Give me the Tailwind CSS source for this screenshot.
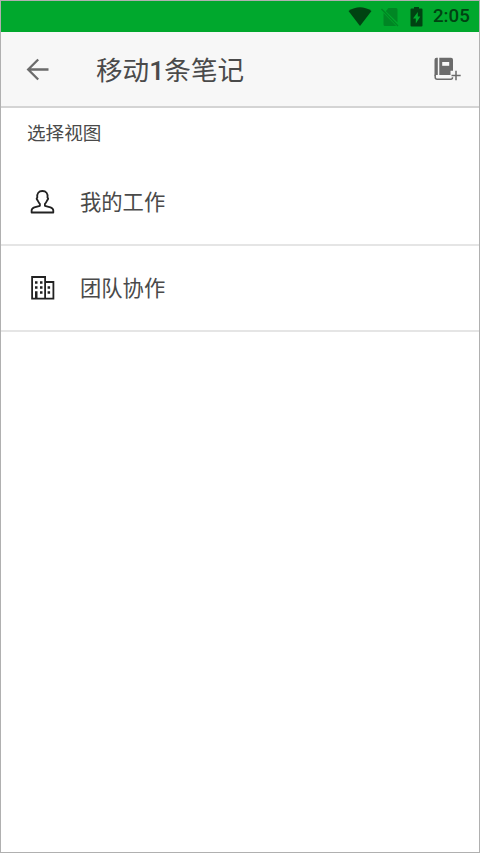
<!DOCTYPE html>
<html lang="zh-CN">
<head>
<meta charset="utf-8">
<title>移动1条笔记</title>
<script src="https://cdn.jsdelivr.net/npm/@tailwindcss/browser@4"></script>
</head>
<body class="bg-white">
<div class="flex h-[853px] w-[480px] flex-col overflow-hidden border border-[#b0b0b0] bg-white font-['Roboto','Noto_Sans_CJK_SC',sans-serif] text-[#4a4a4a]">
  <div class="flex h-[31px] shrink-0 items-center justify-end bg-[#00a82d] pr-[10px] text-[#004312]">
    <svg class="mr-[9px] h-[20px] w-[24px]" viewBox="0 0 24 20" fill="currentColor"><path d="M.5 4Q12-3.500 23.500 4L12 19Z"/></svg>
    <svg class="mr-[11px] h-[20px] w-[18px]" viewBox="0 0 18 20" fill="#008624"><path d="M4.800 4.300 7.500 1H15q1.500 0 1.500 1.500V15.500ZM2.500 6 15.200 19H4Q2.500 19 2.500 17.500Z"/><path d="M.5 2 17 19" stroke="#008624" stroke-width="1.300"/></svg>
    <svg class="mr-[10px] h-[20px] w-[13px]" viewBox="0 0 13 20" fill="currentColor"><path fill-rule="evenodd" d="M4 0h5v1.500h2.500Q12.500 1.500 12.500 2.500v16Q12.500 19.500 11.500 19.500h-10Q.5 19.500 .5 18.500v-16Q.5 1.500 1.500 1.500H4ZM7.800 5 3 11.500H5.800v5L10.300 9.500H7.800Z"/></svg>
    <span class="w-[36px] text-[18.7px] leading-[31px] font-medium whitespace-nowrap">2:05</span>
  </div>
  <header class="flex h-[76px] shrink-0 items-center border-b-2 border-[#d4d4d4] bg-[#f7f7f7] pr-[18px] pl-[25px]">
    <svg class="h-[24px] w-[24px]" viewBox="0 0 24 24" fill="none" stroke="#6b6b6b" stroke-width="2.300"><path d="M22.500 12.500H2.500M12.200 2.500 2.200 12.500l10 10"/></svg>
    <h1 class="ml-[46px] grow pt-[3px] text-[26.600px] leading-[40px] whitespace-nowrap">移动<span class="font-medium">1</span>条笔记</h1>
    <svg class="h-[24px] w-[27px]" viewBox="0 0 27 24"><g transform="translate(.5 .8)"><path fill="#6b6b6b" d="M2 0H3.300V17.300H2Q.9 17.300 0 18.500V2Q0 0 2 0ZM4.800 0H16.500Q18.500 0 18.500 2V13H16V17.300H4.800Z"/><path fill="#f7f7f7" d="M7.700 4.200h7v3.800h-7z"/><path fill="none" stroke="#6b6b6b" stroke-width="1.500" d="M.7 17V19.500Q.7 21.500 2.700 21.500H16.500Q18 21.500 18 19.500M21.500 13v9.500M17 17.700H26.200"/></g></svg>
  </header>
  <main>
    <h2 class="h-[51px] pt-px pl-[26px] text-[18.6px] leading-[51px]">选择视图</h2>
    <ul>
      <li class="flex h-[87px] items-center border-b-2 border-[#e5e5e5] pl-[29px]">
        <svg class="h-[26px] w-[26px]" viewBox="0 0 26 26" fill="none" stroke="#222" stroke-width="1.800" stroke-linejoin="round"><path transform="translate(-.3 0)" d="M10.200 16.800V15C8.500 13.500 8.300 11.500 7.300 10.500c-.6-.6-.4-1.500.3-1.900C7 4.500 9 2 12.700 2s5.700 2.500 5.100 6.600c.7.400.9 1.300.3 1.900-1 1-1.200 3-2.900 4.500v1.800L20.800 18.300Q23.600 19.400 23.600 21.500V23.500H1.900V21.500Q1.900 19.400 4.600 18.300Z"/></svg>
        <span class="ml-[24px] pt-[2px] text-[21.3px] leading-[32px]">我的工作</span>
      </li>
      <li class="flex h-[86px] items-center border-b-2 border-[#e5e5e5] pl-[29px]">
        <svg class="h-[26px] w-[26px]" viewBox="0 0 26 26"><g transform="translate(-.4 -.3)"><path fill="none" stroke="#222" stroke-width="1.800" d="M2.500 2.300H15.500V24H2.500ZM15.500 7.300H23.800V24H15.500"/><path fill="#222" d="M5.400 6.500h2.500v2.500H5.400zM10.400 6.500h2.500v2.500h-2.500zM5.400 11.500h2.500v2.500H5.400zM10.400 11.500h2.500v2.500h-2.500zM5.400 16.500h2.500v7H5.400zM10.400 16.500h2.500v2.500h-2.500zM18 11.500h2.500v2.500h-2.500zM18 16.500h2.500v2.500h-2.500z"/></g></svg>
        <span class="ml-[24px] pt-px text-[21.3px] leading-[32px]">团队协作</span>
      </li>
    </ul>
  </main>
</div>
</body>
</html>
